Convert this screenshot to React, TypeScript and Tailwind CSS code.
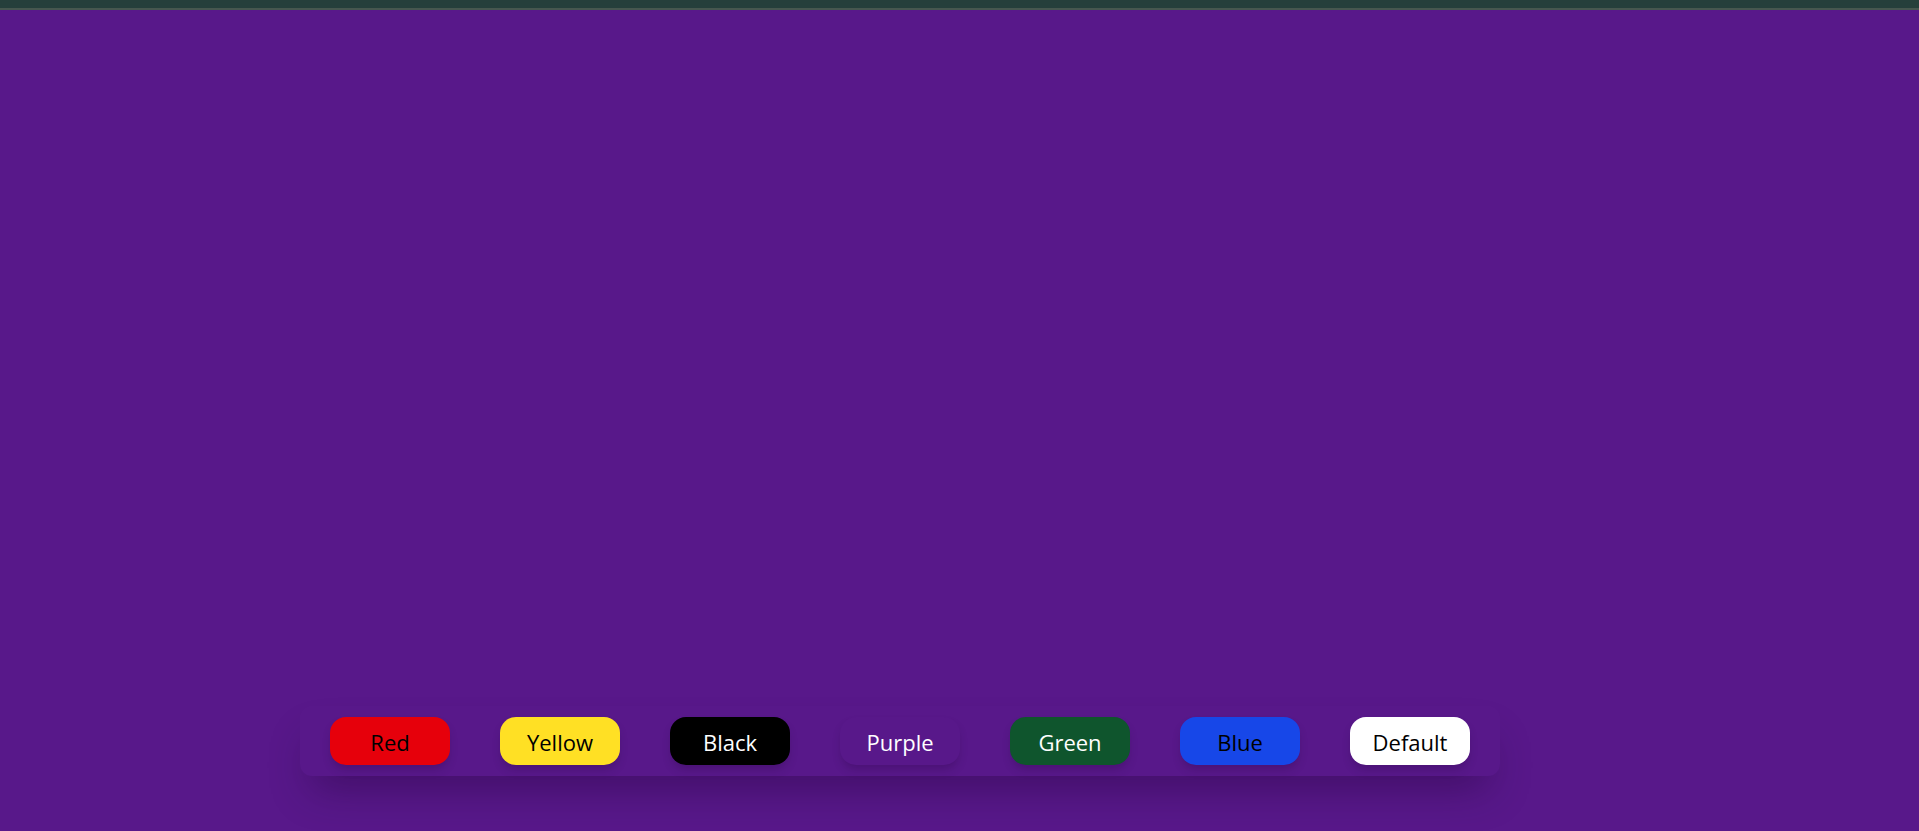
import React from "react";

const colors = [
  { name: "Red", bg: "bg-[#e6000b]", text: "text-black" },
  { name: "Yellow", bg: "bg-[#ffe024]", text: "text-black" },
  { name: "Black", bg: "bg-black", text: "text-white" },
  { name: "Purple", bg: "bg-[#58188a]", text: "text-white" },
  { name: "Green", bg: "bg-[#0f552d]", text: "text-white" },
  { name: "Blue", bg: "bg-[#1747e8]", text: "text-black" },
  { name: "Default", bg: "bg-white", text: "text-black" },
];

export default function App() {
  const [color, setColor] = React.useState("bg-[#58188a]");

  return (
    <div
      className={`${color} w-full h-[831px] flex flex-col font-['Open_Sans',sans-serif]`}
    >
      <div className="h-[10px] bg-[#253f3b] border-b-2 border-[#46574f] shrink-0" />
      <div className="flex-1" />
      <div className="ml-[300px] mb-[55px] w-[1200px] flex gap-[50px] px-[30px] py-[11px] rounded-xl shadow-[0_24px_40px_-12px_rgba(30,0,50,0.4)]">
        {colors.map((c) => (
          <button
            key={c.name}
            onClick={() => setColor(c.bg)}
            className={`${c.bg} ${c.text} w-[120px] h-[48px] rounded-2xl text-[22px] leading-none pt-[2px] shadow-[0_6px_10px_-2px_rgba(30,0,50,0.25)]`}
          >
            {c.name}
          </button>
        ))}
      </div>
    </div>
  );
}
